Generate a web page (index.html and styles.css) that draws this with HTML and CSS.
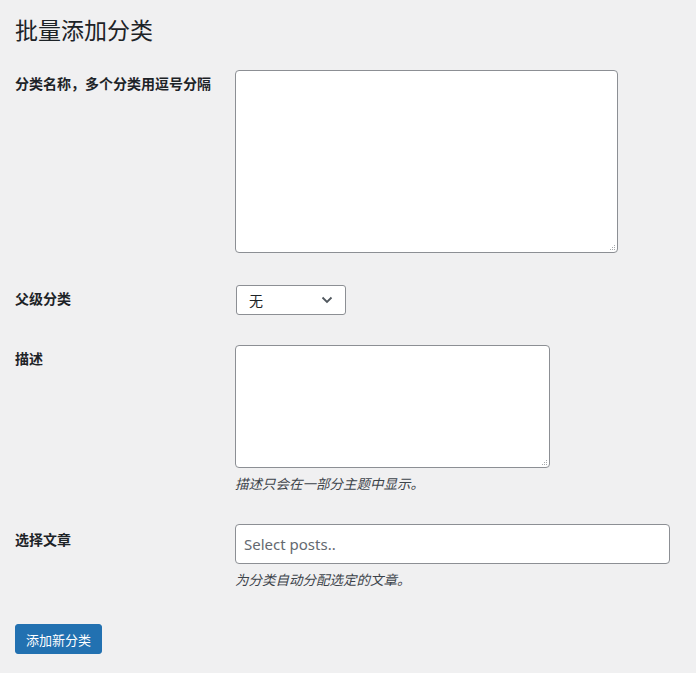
FILE: index.html
```html
<!DOCTYPE html>
<html>
  <head>
    <title>批量添加分类</title>
    <meta charset="UTF-8">
    <link rel="stylesheet" href="styles.css">
  </head>

  <body>
    <div class="wrap">
      <h1>批量添加分类</h1>
      <form>
        <div class="form-row first">
          <label class="row-label" for="names">分类名称，多个分类用逗号分隔</label>
          <div class="row-field">
            <div class="area-wrap">
              <textarea id="names" class="names-box"></textarea>
              <svg class="grip" width="7" height="7" viewBox="0 0 7 7">
                <rect x="6" y="2" width="1" height="1"/>
                <rect x="4" y="4" width="1" height="1"/>
                <rect x="6" y="4" width="1" height="1"/>
                <rect x="2" y="6" width="1" height="1"/>
                <rect x="4" y="6" width="1" height="1"/>
                <rect x="6" y="6" width="1" height="1"/>
              </svg>
            </div>
          </div>
        </div>

        <div class="form-row">
          <label class="row-label" for="parent">父级分类</label>
          <div class="row-field">
            <div class="select-box">
              <span>无</span>
              <svg width="12" height="8" viewBox="0 0 12 8">
                <path d="M1.5 1.5 L6 6 L10.5 1.5" fill="none" stroke="#50575e" stroke-width="1.8"/>
              </svg>
            </div>
          </div>
        </div>

        <div class="form-row">
          <label class="row-label" for="desc">描述</label>
          <div class="row-field">
            <div class="area-wrap">
              <textarea id="desc" class="desc-box"></textarea>
              <svg class="grip" width="7" height="7" viewBox="0 0 7 7">
                <rect x="6" y="2" width="1" height="1"/>
                <rect x="4" y="4" width="1" height="1"/>
                <rect x="6" y="4" width="1" height="1"/>
                <rect x="2" y="6" width="1" height="1"/>
                <rect x="4" y="6" width="1" height="1"/>
                <rect x="6" y="6" width="1" height="1"/>
              </svg>
            </div>
            <p class="description">描述只会在一部分主题中显示。</p>
          </div>
        </div>

        <div class="form-row">
          <label class="row-label" for="posts">选择文章</label>
          <div class="row-field">
            <input id="posts" class="posts-box" type="text" placeholder="Select posts..">
            <p class="description">为分类自动分配选定的文章。</p>
          </div>
        </div>

        <div class="submit">
          <button type="button" class="button-primary">添加新分类</button>
        </div>
      </form>
    </div>
  </body>
</html>
```

FILE: styles.css
```css
body {
  margin: 0;
  padding: 0;
  background-color: #f0f0f1;
  color: #1d2327;
  font-family: "Segoe UI", "Noto Sans", "Noto Sans CJK SC", sans-serif;
  font-size: 13px;
}

.wrap {
  padding: 0 15px;
}

h1 {
  margin: 0;
  padding: 15px 0 10px;
  font-size: 23px;
  font-weight: 400;
  line-height: 30px;
}

.form-row {
  display: flex;
}

.row-label {
  width: 220px;
  flex-shrink: 0;
  padding-top: 20px;
  font-size: 14px;
  font-weight: 700;
  line-height: 18px;
}

.row-field {
  padding: 15px 0;
}

.area-wrap {
  position: relative;
  width: fit-content;
}

.grip {
  position: absolute;
  right: 3px;
  bottom: 3px;
  fill: #a7aaad;
}

textarea,
.posts-box,
.select-box {
  box-sizing: border-box;
  display: block;
  background-color: #fff;
  border: 1px solid #8c8f94;
  border-radius: 4px;
  font-family: inherit;
  margin: 0;
}

textarea {
  resize: none;
}

.names-box {
  width: 383px;
  height: 183px;
}

.first .row-field {
  padding-bottom: 17px;
}

.desc-box {
  width: 315px;
  height: 123px;
}

.select-box {
  width: 110px;
  height: 30px;
  margin-left: 1px;
  padding: 0 12px 0 12px;
  display: flex;
  align-items: center;
  justify-content: space-between;
  font-size: 14px;
  border-radius: 3px;
}

.posts-box {
  width: 435px;
  height: 40px;
  padding: 0 8px;
  font-size: 15px;
  color: #2c3338;
  outline: none;
}

.posts-box::placeholder {
  color: #646970;
}

.description {
  margin: 6px 0 0;
  font-size: 13.5px;
  font-style: italic;
  line-height: 20px;
  color: #3c434a;
}

.form-row:nth-child(4) .row-label {
  padding-top: 22px;
}

.submit {
  padding-top: 19px;
}

.button-primary {
  height: 30px;
  padding: 0 10px;
  background-color: #2271b1;
  border: 1px solid #2271b1;
  border-radius: 3px;
  color: #fff;
  font-family: inherit;
  font-size: 13px;
  cursor: pointer;
}
```
